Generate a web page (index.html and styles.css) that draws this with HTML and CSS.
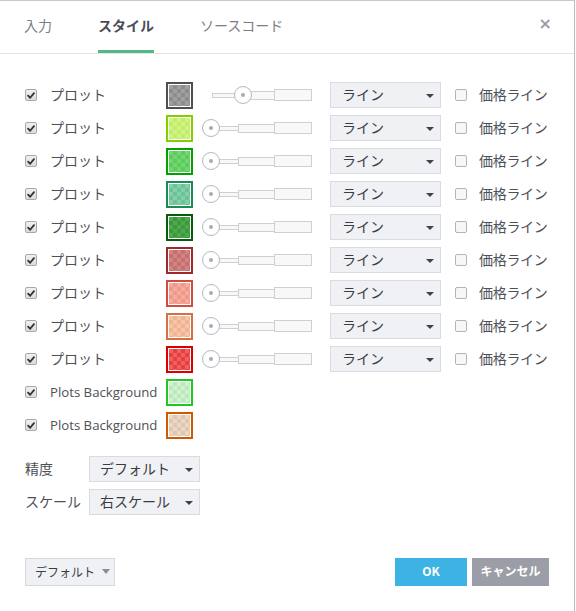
FILE: index.html
```html
<!DOCTYPE html>
<html lang="ja">
<head>
<meta charset="utf-8">
<link rel="stylesheet" href="styles.css">
</head>
<body>
<div class="dialog">
  <div class="header">
    <div class="tabs">
      <span class="tab">入力</span>
      <span class="tab active">スタイル</span>
      <span class="tab">ソースコード</span>
    </div>
    <span class="close">×</span>
  </div>
  <div class="content">
    <div class="rows">
      <div class="row">
        <span class="cb on"><svg viewBox="0 0 12 12"><path d="M2.5 6.2 L5 8.7 L9.6 3.2" /></svg></span>
        <span class="lbl">プロット</span>
        <span class="sw s1"><i></i></span>
        <span class="slider"><span class="track"><b class="t1"></b><b class="t2"></b><b class="t3"></b></span><span class="knob k-mid"></span></span>
        <span class="sel">ライン<em class="arr"></em></span>
        <span class="cb"></span>
        <span class="lbl2">価格ライン</span>
      </div>
      <div class="row">
        <span class="cb on"><svg viewBox="0 0 12 12"><path d="M2.5 6.2 L5 8.7 L9.6 3.2" /></svg></span>
        <span class="lbl">プロット</span>
        <span class="sw s2"><i></i></span>
        <span class="slider"><span class="track"><b class="t1"></b><b class="t2"></b><b class="t3"></b></span><span class="knob"></span></span>
        <span class="sel">ライン<em class="arr"></em></span>
        <span class="cb"></span>
        <span class="lbl2">価格ライン</span>
      </div>
      <div class="row">
        <span class="cb on"><svg viewBox="0 0 12 12"><path d="M2.5 6.2 L5 8.7 L9.6 3.2" /></svg></span>
        <span class="lbl">プロット</span>
        <span class="sw s3"><i></i></span>
        <span class="slider"><span class="track"><b class="t1"></b><b class="t2"></b><b class="t3"></b></span><span class="knob"></span></span>
        <span class="sel">ライン<em class="arr"></em></span>
        <span class="cb"></span>
        <span class="lbl2">価格ライン</span>
      </div>
      <div class="row">
        <span class="cb on"><svg viewBox="0 0 12 12"><path d="M2.5 6.2 L5 8.7 L9.6 3.2" /></svg></span>
        <span class="lbl">プロット</span>
        <span class="sw s4"><i></i></span>
        <span class="slider"><span class="track"><b class="t1"></b><b class="t2"></b><b class="t3"></b></span><span class="knob"></span></span>
        <span class="sel">ライン<em class="arr"></em></span>
        <span class="cb"></span>
        <span class="lbl2">価格ライン</span>
      </div>
      <div class="row">
        <span class="cb on"><svg viewBox="0 0 12 12"><path d="M2.5 6.2 L5 8.7 L9.6 3.2" /></svg></span>
        <span class="lbl">プロット</span>
        <span class="sw s5"><i></i></span>
        <span class="slider"><span class="track"><b class="t1"></b><b class="t2"></b><b class="t3"></b></span><span class="knob"></span></span>
        <span class="sel">ライン<em class="arr"></em></span>
        <span class="cb"></span>
        <span class="lbl2">価格ライン</span>
      </div>
      <div class="row">
        <span class="cb on"><svg viewBox="0 0 12 12"><path d="M2.5 6.2 L5 8.7 L9.6 3.2" /></svg></span>
        <span class="lbl">プロット</span>
        <span class="sw s6"><i></i></span>
        <span class="slider"><span class="track"><b class="t1"></b><b class="t2"></b><b class="t3"></b></span><span class="knob"></span></span>
        <span class="sel">ライン<em class="arr"></em></span>
        <span class="cb"></span>
        <span class="lbl2">価格ライン</span>
      </div>
      <div class="row">
        <span class="cb on"><svg viewBox="0 0 12 12"><path d="M2.5 6.2 L5 8.7 L9.6 3.2" /></svg></span>
        <span class="lbl">プロット</span>
        <span class="sw s7"><i></i></span>
        <span class="slider"><span class="track"><b class="t1"></b><b class="t2"></b><b class="t3"></b></span><span class="knob"></span></span>
        <span class="sel">ライン<em class="arr"></em></span>
        <span class="cb"></span>
        <span class="lbl2">価格ライン</span>
      </div>
      <div class="row">
        <span class="cb on"><svg viewBox="0 0 12 12"><path d="M2.5 6.2 L5 8.7 L9.6 3.2" /></svg></span>
        <span class="lbl">プロット</span>
        <span class="sw s8"><i></i></span>
        <span class="slider"><span class="track"><b class="t1"></b><b class="t2"></b><b class="t3"></b></span><span class="knob"></span></span>
        <span class="sel">ライン<em class="arr"></em></span>
        <span class="cb"></span>
        <span class="lbl2">価格ライン</span>
      </div>
      <div class="row">
        <span class="cb on"><svg viewBox="0 0 12 12"><path d="M2.5 6.2 L5 8.7 L9.6 3.2" /></svg></span>
        <span class="lbl">プロット</span>
        <span class="sw s9"><i></i></span>
        <span class="slider"><span class="track"><b class="t1"></b><b class="t2"></b><b class="t3"></b></span><span class="knob"></span></span>
        <span class="sel">ライン<em class="arr"></em></span>
        <span class="cb"></span>
        <span class="lbl2">価格ライン</span>
      </div>
      <div class="row">
        <span class="cb on"><svg viewBox="0 0 12 12"><path d="M2.5 6.2 L5 8.7 L9.6 3.2" /></svg></span>
        <span class="lbl latin">Plots Background</span>
        <span class="sw s10"><i></i></span>
      </div>
      <div class="row">
        <span class="cb on"><svg viewBox="0 0 12 12"><path d="M2.5 6.2 L5 8.7 L9.6 3.2" /></svg></span>
        <span class="lbl latin">Plots Background</span>
        <span class="sw s11"><i></i></span>
      </div>
    </div>
    <div class="props">
      <div class="prop">
        <span class="plbl">精度</span>
        <span class="sel small">デフォルト<em class="arr"></em></span>
      </div>
      <div class="prop">
        <span class="plbl">スケール</span>
        <span class="sel small">右スケール<em class="arr"></em></span>
      </div>
    </div>
  </div>
  <div class="footer">
    <span class="defbtn">デフォルト<em class="arr2"></em></span>
    <div class="actions">
      <span class="btn ok">OK</span>
      <span class="btn cancel">キャンセル</span>
    </div>
  </div>
</div>
</body>
</html>
```
FILE: styles.css
```css
html, body {
  margin: 0;
  padding: 0;
  background: #ffffff;
}
body {
  width: 576px;
  height: 611px;
  overflow: hidden;
  font-family: "Noto Sans CJK JP", "Open Sans", sans-serif;
  color: #4a4c52;
}
.dialog {
  width: 575px;
  height: 611px;
  box-sizing: border-box;
  border-top: 1px solid #c9c9c9;
  border-right: 1px solid #bcbcbc;
  background: #fff;
  position: relative;
}
.header {
  height: 52px;
  border-bottom: 1px solid #e0e3e8;
  display: flex;
  align-items: stretch;
  justify-content: space-between;
}
.tabs {
  display: flex;
  gap: 46px;
  padding-left: 24px;
}
.tab {
  font-size: 14px;
  color: #7b7e86;
  display: flex;
  align-items: center;
  height: 52px;
  box-sizing: border-box;
  border-bottom: 3px solid transparent;
  padding-bottom: 1px;
}
.tab.active {
  color: #4a4d55;
  font-weight: bold;
  border-bottom-color: #54b888;
}
.close {
  font-size: 16px;
  font-weight: bold;
  color: #9a9ca2;
  margin-right: 22px;
  margin-top: 15px;
  line-height: 1;
  font-family: "DejaVu Sans", sans-serif;
}
.content {
  padding-top: 28px;
}
.rows {
  display: flex;
  flex-direction: column;
  gap: 7px;
}
.row {
  display: flex;
  align-items: center;
  height: 26px;
}
.cb {
  width: 12px;
  height: 12px;
  box-sizing: border-box;
  border: 1px solid #b4b4b4;
  border-radius: 2px;
  background: #f7f7f7;
  display: flex;
  align-items: center;
  justify-content: center;
}
.row > .cb:first-child {
  margin-left: 25px;
}
.cb.on {
  background: linear-gradient(#f0f0f0, #dcdcdc);
  border-color: #a8a8a8;
}
.cb svg {
  width: 11px;
  height: 11px;
  fill: none;
  stroke: #333;
  stroke-width: 2.2;
  stroke-linecap: round;
  stroke-linejoin: round;
}
.lbl {
  margin-left: 13px;
  width: 116px;
  font-size: 14px;
  color: #4e5056;
  white-space: nowrap;
  padding-bottom: 3px;
}
.lbl.latin {
  font-family: "Open Sans", "Noto Sans", sans-serif;
  font-size: 13.2px;
  padding-bottom: 1px;
}
.sw {
  width: 27px;
  height: 27px;
  box-sizing: border-box;
  border: 2px solid var(--bd);
  padding: 1px;
  background: #fff;
  display: block;
}
.sw i {
  display: block;
  width: 100%;
  height: 100%;
  background: repeating-conic-gradient(var(--a) 0 25%, var(--b) 0 50%) 0 0 / 8px 8px;
}
.s1 { --a: #8c8c8c; --b: #a0a0a0; --bd: #4f4f4f; }
.s2 { --a: #c0ee66; --b: #d0f288; --bd: #80cf00; }
.s3 { --a: #5bcb5b; --b: #74d574; --bd: #00a200; }
.s4 { --a: #6bc298; --b: #84cea9; --bd: #1a8b55; }
.s5 { --a: #3a9a3a; --b: #50a850; --bd: #0a5b0a; }
.s6 { --a: #c86e6e; --b: #d28484; --bd: #9d2a2a; }
.s7 { --a: #ef988a; --b: #f4aca0; --bd: #d24c3e; }
.s8 { --a: #f2b392; --b: #f5c4a9; --bd: #d27242; }
.s9 { --a: #ea3e3e; --b: #ef6060; --bd: #d80000; }
.s10 { --a: #bce9bc; --b: #d2f0d2; --bd: #1fc81f; }
.s11 { --a: #dfc7af; --b: #ebd8c6; --bd: #d05a00; }
.slider {
  position: relative;
  margin-left: 9px;
  width: 112px;
  height: 18px;
  display: flex;
  align-items: center;
}
.track {
  margin-left: 10px;
  display: flex;
  align-items: center;
}
.track b {
  display: block;
  box-sizing: border-box;
  background: #f8f8f8;
  border: 1px solid #cfd0d2;
}
.track .t1 { width: 27px; height: 5px; }
.track .t2 { width: 37px; height: 9px; margin-left: -1px; }
.track .t3 { width: 38px; height: 12px; margin-left: -1px; }
.knob {
  position: absolute;
  left: 0;
  top: 0;
  width: 18px;
  height: 18px;
  box-sizing: border-box;
  border: 1px solid #b5b8c0;
  border-radius: 50%;
  background: #fff;
}
.knob::after {
  content: "";
  position: absolute;
  left: 6px;
  top: 6px;
  width: 4px;
  height: 4px;
  border-radius: 50%;
  background: #a8abb3;
}
.knob.k-mid {
  left: 32px;
}
.sel {
  margin-left: 16px;
  width: 111px;
  height: 26px;
  box-sizing: border-box;
  background: #f0f1f4;
  border: 1px solid #d9dbe0;
  font-size: 14px;
  color: #3a3c42;
  display: flex;
  align-items: center;
  padding-left: 11px;
  padding-bottom: 3px;
  position: relative;
}
.arr {
  position: absolute;
  right: 6px;
  top: 11px;
  width: 0;
  height: 0;
  border-left: 4px solid transparent;
  border-right: 4px solid transparent;
  border-top: 4px solid #404248;
}
.row > .sel + .cb {
  margin-left: 14px;
}
.lbl2 {
  margin-left: 12px;
  font-size: 14px;
  letter-spacing: -0.3px;
  color: #4e5056;
  white-space: nowrap;
  padding-bottom: 3px;
}
.props {
  margin-top: 18px;
  display: flex;
  flex-direction: column;
  gap: 7px;
}
.prop {
  display: flex;
  align-items: center;
  height: 26px;
  padding-left: 25px;
}
.plbl {
  width: 64px;
  font-size: 14px;
  color: #4e5056;
  white-space: nowrap;
  padding-bottom: 3px;
}
.sel.small {
  margin-left: 0;
  padding-left: 10px;
}
.footer {
  position: absolute;
  left: 25px;
  right: 25px;
  top: 557px;
  display: flex;
  justify-content: space-between;
  align-items: center;
}
.defbtn {
  width: 90px;
  height: 28px;
  box-sizing: border-box;
  background: #f0f1f4;
  border: 1px solid #d6d9de;
  font-size: 12px;
  color: #3a3c42;
  display: flex;
  align-items: center;
  padding-left: 9px;
  padding-bottom: 2px;
  gap: 7px;
}
.arr2 {
  width: 0;
  height: 0;
  border-left: 4px solid transparent;
  border-right: 4px solid transparent;
  border-top: 5px solid #8a8c92;
}
.actions {
  display: flex;
  gap: 5px;
}
.btn {
  height: 28px;
  display: flex;
  align-items: center;
  justify-content: center;
  font-size: 12px;
  font-weight: bold;
  color: #fff;
  box-sizing: border-box;
  padding-bottom: 3px;
}
.ok {
  width: 72px;
  background: #3cb3e4;
}
.cancel {
  width: 77px;
  background: #9b9ea6;
}
```
